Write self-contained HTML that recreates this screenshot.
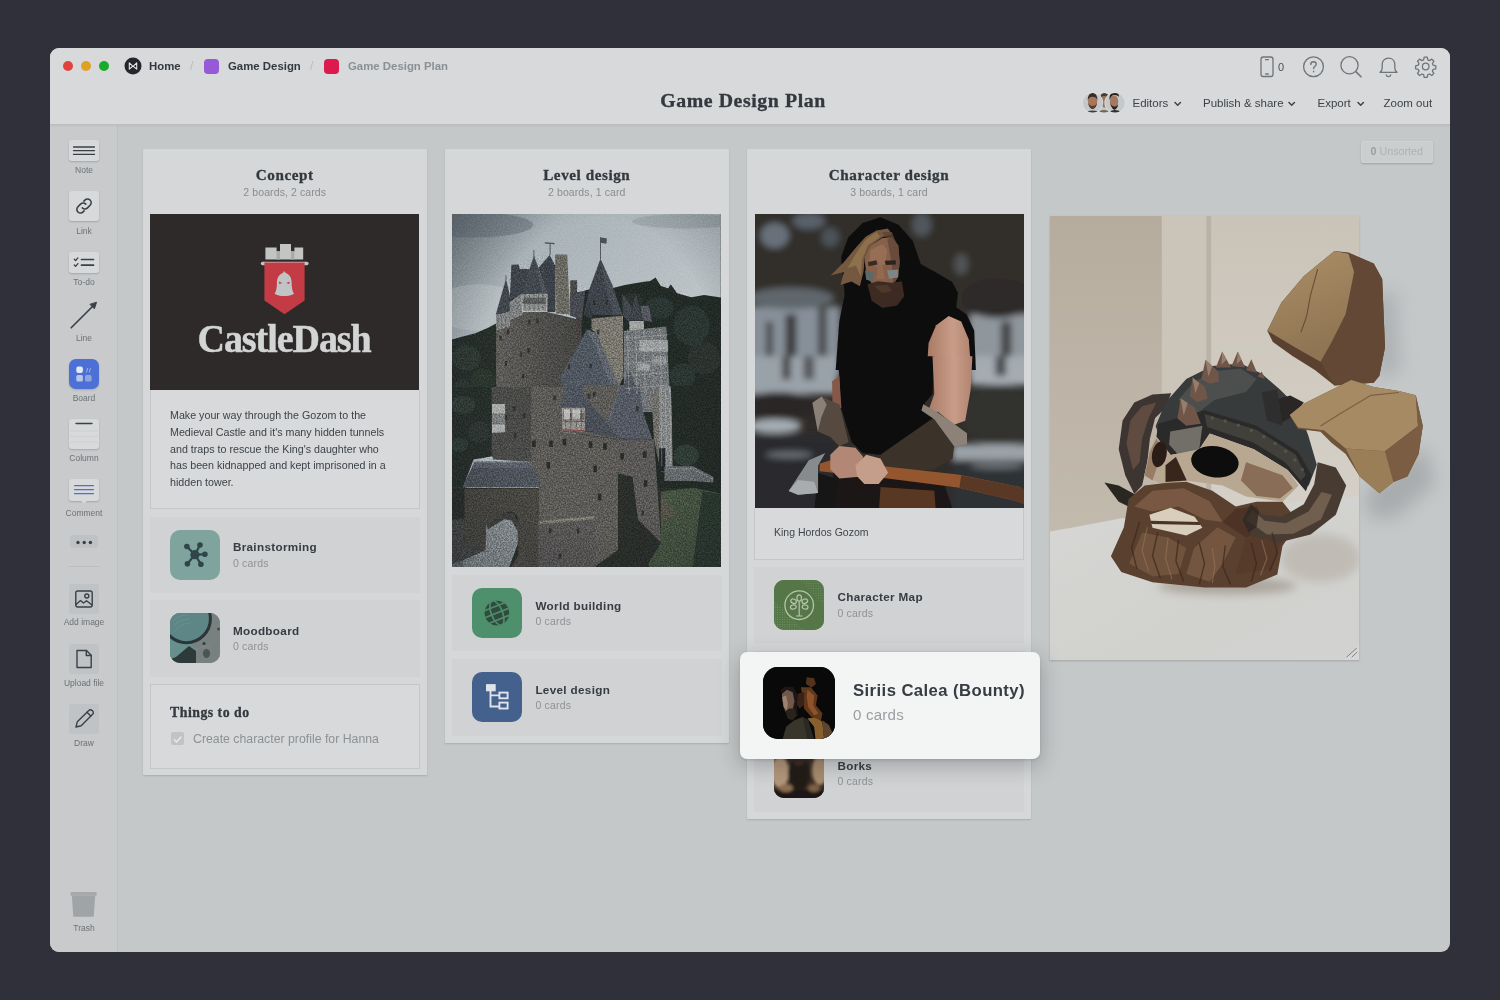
<!DOCTYPE html>
<html lang="en">
<head>
<meta charset="utf-8">
<title>Game Design Plan</title>
<style>
*{box-sizing:border-box;margin:0;padding:0}
html,body{width:1500px;height:1000px;overflow:hidden;background:#2f3039;font-family:"Liberation Sans",sans-serif;color:#33393f}
.abs{position:absolute}
#win{will-change:transform;position:absolute;left:50px;top:48px;width:1400px;height:904px;border-radius:9px;background:#c5c8c9;overflow:hidden}
#hdr{position:absolute;left:0;top:0;width:1400px;height:77px;z-index:5;background:#d7d9da;border-bottom:1px solid #bcbfc1;box-shadow:0 1px 2px rgba(0,0,0,.06)}
#side{position:absolute;left:0;top:77px;width:68px;height:827px;background:#c8cacb;border-right:1px solid #bdc0c2}
.tl{position:absolute;top:12.800px;width:10.600px;height:10.600px;border-radius:50%}
.bc{position:absolute;top:11.300px;font-size:11.400px;font-weight:bold;color:#33393f;line-height:14px;white-space:nowrap}
.sep{position:absolute;top:11.300px;font-size:12px;color:#b9bcbe;line-height:14px}
.sq{position:absolute;top:11.300px;width:15px;height:15px;border-radius:4px}
#title{position:absolute;left:0;width:1386px;top:38.700px;text-align:center;font-family:"Liberation Serif",serif;font-weight:bold;font-size:19.800px;letter-spacing:.6px;-webkit-text-stroke:.35px #33393f;line-height:26px;color:#33393f}
.menu{position:absolute;top:48px;font-size:11.5px;line-height:14px;color:#3d4349;white-space:nowrap}
.tool{position:absolute;left:0;width:68px;text-align:center;font-size:8.5px;color:#6c7277;line-height:10px}
.tbox{position:absolute;left:19px;width:30px;background:#d7d9da;border-radius:3px;box-shadow:0 1px 2px rgba(0,0,0,.18)}
.col{position:absolute;background:#d5d7d8;box-shadow:0 1px 2px rgba(0,0,0,.14);border-radius:1px}
.ctitle{position:absolute;left:0;width:100%;top:16px;text-align:center;font-family:"Liberation Serif",serif;font-weight:bold;font-size:15.200px;letter-spacing:.55px;-webkit-text-stroke:.3px #33393f;line-height:20px;color:#33393f}
.csub{position:absolute;left:0;width:100%;top:37.400px;text-align:center;font-size:10.500px;line-height:12px;color:#888d91;letter-spacing:.1px}
.card{position:absolute;left:7px;width:270px;background:#d0d2d3}
.card.b{background:#d7d9da;border:1px solid #c4c7c9}
.ic{position:absolute;left:20px;top:13px;width:50px;height:50px;border-radius:10px;overflow:hidden}
.bt{position:absolute;left:83.400px;top:22.500px;font-size:11.700px;letter-spacing:.33px;font-weight:bold;line-height:15px;color:#363c42;white-space:nowrap}
.bs{position:absolute;left:83.400px;top:40px;font-size:10.500px;line-height:12px;color:#8e9397;letter-spacing:.2px}

.av{position:absolute;top:45px;width:20px;height:20px;border-radius:50%;border:1.500px solid #d7d9da;overflow:hidden}
.av i{position:absolute;left:4px;top:3px;width:9px;height:10px;border-radius:50%;background:#8a6a58;box-shadow:0 10px 0 3px #4d4f55}
.chev{position:absolute;top:52.500px;width:8px;height:6px;fill:none;stroke:#3d4349;stroke-width:1.500;stroke-linecap:round;stroke-linejoin:round}

.gbox{position:absolute;left:19px;width:30px;height:30px;background:#c0c3c5;border-radius:3px}

#pg{position:absolute;left:-50px;top:-48px;width:1500px;height:1000px}
.unsorted{border:1px solid #d0d3d4;position:absolute;left:1361px;top:141px;width:71.500px;height:21.500px;border-radius:2px;background:#cdd0d1;box-shadow:0 1px 2px rgba(0,0,0,.2);font-size:10.700px;line-height:19.500px;text-align:center;color:#aeb2b5;background:#cbcecf}
.unsorted b{color:#9a9ea2}
.body{position:absolute;left:19.500px;top:17px;width:250px;white-space:nowrap;font-size:10.700px;line-height:16.800px;color:#3d4349}
#float{position:absolute;left:740px;top:651.700px;width:300px;height:107.700px;border-radius:7px;background:#f3f4f4;box-shadow:0 6px 22px rgba(20,24,30,.28),0 1px 3px rgba(20,24,30,.12)}
</style>
</head>
<body>
<div id="win">
  <div id="hdr">
    <div class="tl" style="left:12.5px;background:#e0443e"></div>
    <div class="tl" style="left:30.5px;background:#dea123"></div>
    <div class="tl" style="left:48.5px;background:#1aab29"></div>
    <svg class="abs" style="left:74px;top:9.300px" width="18" height="18" viewBox="0 0 18 18"><circle cx="9" cy="9" r="8.5" fill="#24262b"/><path d="M5.3 12.2V5.9l3.7 3.4 3.7-3.4v6.3l-3.7-3.2z" fill="none" stroke="#e4e6e7" stroke-width="1.1" stroke-linejoin="round"/></svg>
    <div class="bc" style="left:99px">Home</div>
    <div class="sep" style="left:140px">/</div>
    <div class="sq" style="left:154px;background:#965ad9"></div>
    <div class="bc" style="left:178px">Game Design</div>
    <div class="sep" style="left:260px">/</div>
    <div class="sq" style="left:274px;background:#dc1a4d"></div>
    <div class="bc" style="left:298px;color:#8b9094">Game Design Plan</div>
    <div id="title">Game Design Plan</div>

    <svg class="abs" style="left:1204px;top:5px" width="190" height="28" viewBox="0 0 190 28" fill="none" stroke="#6f757a" stroke-width="1.3" stroke-linecap="round" stroke-linejoin="round">
      <rect x="7" y="4" width="12" height="19.5" rx="2.2"/><path d="M11.5 6.6h3M11.7 21h2.6"/>
      <circle cx="59.5" cy="13.7" r="9.9"/><path d="M56.8 11.4c0-1.6 1.2-2.6 2.7-2.6s2.7 1 2.7 2.4c0 2-2.6 2.1-2.6 4.2M59.6 18.3v.4" stroke-width="1.4"/>
      <circle cx="95.5" cy="12.3" r="8.6"/><path d="M101.8 18.6l5.2 5.2" stroke-width="1.6"/>
      <path d="M126 19.3c1.6-1.2 2.2-2.6 2.2-4.4v-3.4c0-3.7 2.6-6.4 6.3-6.4s6.3 2.7 6.3 6.400v3.4c0 1.800.6 3.200 2.200 4.400z"/><path d="M132.200 21.800c.3 1.200 1.200 1.900 2.300 1.900s2-.7 2.300-1.900"/>
      <circle cx="171.700" cy="13.500" r="3.300"/>
      <path d="M170.200 4.200h3l.6 2.700 1.700.7 2.300-1.500 2.100 2.100-1.500 2.300.7 1.700 2.700.6v3l-2.700.6-.7 1.700 1.500 2.300-2.100 2.100-2.300-1.500-1.700.7-.6 2.700h-3l-.6-2.700-1.700-.7-2.300 1.500-2.100-2.100 1.500-2.300-.7-1.700-2.700-.6v-3l2.700-.6.7-1.700-1.500-2.300 2.100-2.100 2.300 1.500 1.700-.7z"/>
    </svg>
    <div class="abs" style="left:1228px;top:12px;font-size:11px;line-height:14px;color:#4a5056">0</div>
    <svg class="abs" style="left:1030px;top:42px" width="50" height="26" viewBox="0 0 50 26">
      <defs><clipPath id="avc1"><circle cx="12.600" cy="12.800" r="9.800"/></clipPath><clipPath id="avc2"><circle cx="24" cy="12.800" r="9.800"/></clipPath><clipPath id="avc3"><circle cx="35" cy="12.800" r="9.800"/></clipPath></defs>
      <circle cx="24" cy="12.800" r="10.600" fill="#dcdedf"/>
      <g clip-path="url(#avc2)"><rect x="12" y="0" width="24" height="26" fill="#c3c6c8"/><path d="M17 26c0-4 3-6 7-6s7 2 7 6z" fill="#6d6a58"/><ellipse cx="24.500" cy="11.500" rx="4.200" ry="6" fill="#9c7358"/><path d="M20 9c0-4 2-6 4.500-6s4.500 2 4.500 6c-1-2-2-3-4.500-3s-3.500 1-4.500 3z" fill="#4a3a30"/></g>
      <circle cx="35" cy="12.800" r="10.600" fill="#dcdedf"/>
      <g clip-path="url(#avc3)"><rect x="24" y="0" width="24" height="26" fill="#c6c9cb"/><path d="M28 26c0-4 3-6 7-6s7 2 7 6z" fill="#34302d"/><ellipse cx="34" cy="11.500" rx="4.200" ry="6.200" fill="#a17a60"/><path d="M29.500 10c-.5-5 2-8 5-8s4.500 2 4.500 5c-1-1.500-3-2-5-2s-3.500 2-4.500 5z" fill="#26201d"/><path d="M30 13c1 3 2 6 4.500 7 2-1 3.500-3 3.800-6-1 2-2.300 2.500-4 2.500s-3.300-1.500-4.300-3.500z" fill="#2b2320"/></g>
      <circle cx="12.600" cy="12.800" r="10.600" fill="#dcdedf"/>
      <g clip-path="url(#avc1)"><rect x="0" y="0" width="24" height="26" fill="#c4c8cb"/><path d="M5 26c0-4 3-5.500 7.600-5.500s7.600 1.500 7.600 5.500z" fill="#3f4044"/><ellipse cx="12.600" cy="12" rx="4.600" ry="6.400" fill="#a8775b"/><path d="M7.800 10.500c-.3-5 2-7.500 4.800-7.500s5.100 2.500 4.800 7.500c-.8-2.500-2-3.800-4.800-3.800s-4 1.300-4.800 3.800z" fill="#3a2a22"/><path d="M8.200 13c.6 3.500 2 6 4.400 6s3.800-2.500 4.400-6c-1 2-2.400 2.800-4.400 2.800s-3.400-.8-4.400-2.800z" fill="#5a3d2e"/></g>
    </svg>
    <div class="menu" style="left:1082.500px">Editors</div><svg class="chev" style="left:1124px"><path d="M1 1.500l2.700 2.700 2.700-2.700"/></svg>
    <div class="menu" style="left:1153px">Publish &amp; share</div><svg class="chev" style="left:1237.500px"><path d="M1 1.500l2.700 2.700 2.700-2.700"/></svg>
    <div class="menu" style="left:1267.500px">Export</div><svg class="chev" style="left:1306.500px"><path d="M1 1.500l2.700 2.700 2.700-2.700"/></svg>
    <div class="menu" style="left:1333.500px">Zoom out</div>
  </div>

  <div id="side">
    <div class="tbox" style="top:14.5px;height:21px"><svg width="30" height="21"><path d="M4.500 7h21M4.500 10.700h21M4.500 14.400h21" stroke="#3a4046" stroke-width="1.300" stroke-linecap="round"/></svg></div>
    <div class="tool" style="top:40.3px">Note</div>
    <div class="tbox" style="top:66px;height:30px"><svg width="30" height="30" fill="none" stroke="#3a4046" stroke-width="1.600" stroke-linecap="round"><path d="M13.300 16.900a3.600 3.600 0 0 0 5.200 0l2.600-2.700a3.600 3.600 0 0 0-5.200-5.100l-1 1"/><path d="M16.800 13.100a3.600 3.600 0 0 0-5.200 0l-2.700 2.700a3.600 3.600 0 0 0 5.200 5.100l1-1"/></svg></div>
    <div class="tool" style="top:101.2px">Link</div>
    <div class="tbox" style="top:126.5px;height:21px"><svg width="30" height="21" fill="none" stroke="#3a4046" stroke-width="1.400" stroke-linecap="round" stroke-linejoin="round"><path d="M5.300 7.300l1.300 1.300 2.300-2.700M5.300 13l1.300 1.300 2.300-2.700" stroke-width="1.300"/><path d="M12.500 7.500h12M12.500 13.200h12" stroke-width="1.700"/></svg></div>
    <div class="tool" style="top:151.8px">To-do</div>
    <svg class="abs" style="left:18px;top:174px" width="32" height="32" fill="none" stroke="#3a4046" stroke-width="1.600" stroke-linecap="round" stroke-linejoin="round"><path d="M3.200 28.800L25.500 6.500"/><path d="M28.400 3.600l-2 6.200-4.200-4.200z" fill="#3a4046" stroke-width="1"/></svg>
    <div class="tool" style="top:208.2px">Line</div>
    <div class="abs" style="left:19px;top:234px;width:30px;height:30px;border-radius:7px;background:#4c70d6;box-shadow:0 1px 2px rgba(0,0,0,.18)"><svg width="30" height="30"><rect x="7.300" y="7.500" width="6.600" height="6.600" rx="2" fill="#e3e8f3"/><rect x="7.300" y="16" width="6.600" height="6.600" rx="1.600" fill="#b9c6e6"/><rect x="16" y="16" width="6.600" height="6.600" rx="1.600" fill="#8fa5dc"/><path d="M17.500 13.500l1.200-4.500M20.300 13.500l1.200-4.500" stroke="#9fb2e2" stroke-width="1" fill="none"/></svg></div>
    <div class="tool" style="top:268px">Board</div>
    <div class="tbox" style="top:294px;height:30px"><svg width="30" height="30"><path d="M7 4.500h16" stroke="#3a4046" stroke-width="1.400" stroke-linecap="round"/><path d="M1 12h28M1 17.500h28M1 23h28" stroke="#cdd0d1" stroke-width="1"/></svg></div>
    <div class="tool" style="top:328px">Column</div>
    <div class="tbox" style="top:354px;height:21.500px"><svg width="30" height="26" style="overflow:visible"><path d="M11.500 21.500l3.500 3.200 3.500-3.200z" fill="#d7d9da"/><path d="M5.500 6.600h19M5.500 10.600h19M5.500 14.600h19" stroke="#4c70d6" stroke-width="1.200" stroke-linecap="round"/></svg></div>
    <div class="tool" style="top:383px">Comment</div>
    <div class="abs" style="left:19.500px;top:409.5px;width:28.500px;height:13px;border-radius:3px;background:#bfc2c4"><svg width="28.500" height="13"><circle cx="8" cy="6.500" r="1.700" fill="#3a4046"/><circle cx="14.200" cy="6.500" r="1.700" fill="#3a4046"/><circle cx="20.400" cy="6.500" r="1.700" fill="#3a4046"/></svg></div>
    <div class="abs" style="left:17.500px;top:440.5px;width:32px;height:1px;background:#bcbfc1"></div>
    <div class="gbox" style="top:458.5px"><svg width="30" height="30" fill="none" stroke="#3a4046" stroke-width="1.400" stroke-linejoin="round" stroke-linecap="round"><rect x="6.800" y="7" width="16.400" height="16" rx="2"/><circle cx="17.800" cy="12" r="2"/><path d="M7 20.500l4.500-4 3 2.500 3-2.300 5.500 4.300"/></svg></div>
    <div class="tool" style="top:492.2px">Add image</div>
    <div class="gbox" style="top:518.5px"><svg width="30" height="30" fill="none" stroke="#3a4046" stroke-width="1.400" stroke-linejoin="round" stroke-linecap="round"><path d="M8 6.500h9.500l4.700 4.800v12.200h-14.200z"/><path d="M17.300 6.700v4.800h4.700"/></svg></div>
    <div class="tool" style="top:553px">Upload file</div>
    <div class="gbox" style="top:579px"><svg width="30" height="30" fill="none" stroke="#3a4046" stroke-width="1.400" stroke-linejoin="round" stroke-linecap="round"><path d="M7 23l1.300-5.200 11.500-11.300a2.300 2.300 0 0 1 3.300 0l.5.500a2.300 2.300 0 0 1 0 3.300l-11.400 11.400z"/><path d="M18 8.300l3.800 3.800"/></svg></div>
    <div class="tool" style="top:612.7px">Draw</div>
    <svg class="abs" style="left:19px;top:764px" width="30" height="30"><path d="M2.800 6.500h23.400l-1.500 20.800a.6.600 0 0 1-.6.500h-19.200a.6.600 0 0 1-.6-.5z" fill="#9fa4a6"/><path d="M1.600 3.600a.6.600 0 0 1 .6-.6h24.800a.6.600 0 0 1 .6.600v3.200h-26z" fill="#a6aaac"/></svg>
    <div class="tool" style="top:798.3px">Trash</div>
  </div>

  <div id="pg">
    <div class="unsorted"><b>0</b> Unsorted</div>

    <!-- column 1 -->
    <div class="col" style="left:143px;top:149px;width:283.500px;height:626px">
      <div class="ctitle">Concept</div><div class="csub">2 boards, 2 cards</div>
      <div class="abs" id="logo" style="left:7px;top:65px;width:269px;height:176px;background:#2d2a29">
        <svg width="269.500" height="176" viewBox="0 0 269.500 176">
          <path d="M115.400 45.600V33.500h11.200v3.800h3.400V30h11v7.300h3.400v-3.800h8.800v12.100z" fill="#c3c4c4"/>
          <path d="M126.600 37.300h3.400v8.300h-3.400zM141 37.300h3.400v8.300H141z" fill="#a9abab"/>
          <rect x="110.800" y="47.800" width="47.800" height="3.400" rx="1.700" fill="#c3c4c4"/>
          <path d="M114.400 48.400h40.200V86.500L134.500 100.300 114.400 86.500z" fill="#c23b45"/>
          <path d="M134.300 57.600c.8 0 1.200.7 1.200 1.500 4.300 1.200 6.200 5.200 6.200 10.300 0 4.200.7 7.700 2.300 10.300-2.300 1.500-5.600 2.300-9.700 2.300s-7.400-.8-9.700-2.300c1.600-2.600 2.300-6.100 2.300-10.300 0-5.100 1.900-9.100 6.200-10.300 0-.8.400-1.500 1.200-1.500z" fill="#c0c4c5"/>
          <path d="M128.800 67.600l3.600 1.500-3 .8zM139.800 67.600l-3.600 1.500 3 .8z" fill="#c23b45"/>
          <text transform="translate(134.100 137.800) scale(1 1.055)" text-anchor="middle" font-family="'Liberation Serif',serif" font-weight="bold" font-size="38" fill="#d3d4d4" stroke="#d3d4d4" stroke-width=".5" letter-spacing="-1.050">CastleDash</text>
        </svg>
      </div>
      <div class="card b" style="left:6.500px;top:241px;height:118.500px;border-top:0">
        <p class="body">Make your way through the Gozom to the<br>Medieval Castle and it's many hidden tunnels<br>and traps to rescue the King's daughter who<br>has been kidnapped and kept imprisoned in a<br>hidden tower.</p>
      </div>
      <div class="card" style="left:6.500px;top:367.500px;height:76px"><div class="ic" id="ic-brain" style="background:#7fa49e"><!--BRAIN--><svg width="50" height="50" viewBox="0 0 50 50" style="display:block"><line x1="24.9" y1="24.7" x2="16.9" y2="16.5" stroke="#2f4549" stroke-width="2.2"/><circle cx="16.9" cy="16.5" r="2.8" fill="#2f4549"/><line x1="24.9" y1="24.7" x2="30" y2="15" stroke="#2f4549" stroke-width="2.2"/><circle cx="30" cy="15" r="2.8" fill="#2f4549"/><line x1="24.9" y1="24.7" x2="34.9" y2="24.3" stroke="#2f4549" stroke-width="2.2"/><circle cx="34.9" cy="24.3" r="2.8" fill="#2f4549"/><line x1="24.9" y1="24.7" x2="30.9" y2="34.2" stroke="#2f4549" stroke-width="2.2"/><circle cx="30.9" cy="34.2" r="2.8" fill="#2f4549"/><line x1="24.9" y1="24.7" x2="17.4" y2="33.7" stroke="#2f4549" stroke-width="2.2"/><circle cx="17.4" cy="33.7" r="2.8" fill="#2f4549"/><circle cx="24.9" cy="24.7" r="4.6" fill="#2f4549"/></svg><!--/BRAIN--></div><div class="bt">Brainstorming</div><div class="bs">0 cards</div></div>
      <div class="card" style="left:6.500px;top:451px;height:76.500px"><div class="ic" id="ic-mood" style="background:#5f7f80"><!--MOOD--><svg width="50" height="50" viewBox="0 0 50 50" style="display:block"><rect width="50" height="50" fill="#798180"/><path d="M-2 24c8 3 16 5 22 5l6 8v15h-28z" fill="#668f8e"/><path d="M-2 47l8-3 13-11 7 5v14h-28z" fill="#2e393a"/><circle cx="16.400" cy="5.700" r="24" fill="#5f8686" stroke="#2a3638" stroke-width="3"/><path d="M3 8c4-4 9-6 14-6M4 13c4-5 9-7 15-7M5 18c4-5 10-8 16-8" stroke="#7fa3a3" stroke-width=".7" fill="none" opacity=".55"/><ellipse cx="36.500" cy="40.500" rx="3.600" ry="4.600" fill="#4c5553"/><circle cx="34" cy="30.500" r="1.500" fill="#2f3a3b"/><circle cx="48.500" cy="16" r="1.500" fill="#444d4c"/><path d="M26 37c4-3 9-4 14-3" stroke="#8a9290" stroke-width=".8" fill="none" opacity=".6"/></svg><!--/MOOD--></div><div class="bt">Moodboard</div><div class="bs">0 cards</div></div>
      <div class="card b" style="left:6.500px;top:535px;height:84.500px">
        <div class="abs" style="left:19.500px;top:18px;font-family:'Liberation Serif',serif;font-weight:bold;font-size:13.800px;letter-spacing:.5px;-webkit-text-stroke:.3px #33393f;line-height:20px;color:#33393f;white-space:nowrap">Things to do</div>
        <div class="abs" style="left:20px;top:47.200px;width:13px;height:13px;border-radius:2px;background:#c1c4c6"><svg width="13" height="13"><path d="M3.200 6.700l2.300 2.300 4.300-4.800" fill="none" stroke="#e6e8e9" stroke-width="1.600" stroke-linecap="round" stroke-linejoin="round"/></svg></div>
        <div class="abs" style="left:42.500px;top:46.400px;font-size:12.300px;line-height:16px;color:#8c9195;white-space:nowrap">Create character profile for Hanna</div>
      </div>
    </div>

    <!-- column 2 -->
    <div class="col" style="left:445px;top:149px;width:283.500px;height:594px">
      <div class="ctitle">Level design</div><div class="csub">2 boards, 1 card</div>
      <div class="abs" id="castle" style="left:7.400px;top:65px;width:268.600px;height:353px;background:#5d6264"><!--CASTLE--><svg width="268.6" height="353" viewBox="0 0 268.6 353" style="display:block"><defs><linearGradient id="csky" x1="0" y1="0" x2="1" y2="1"><stop offset="0" stop-color="#7c878e"/><stop offset=".2" stop-color="#a9b3b8"/><stop offset=".6" stop-color="#bcc4c7"/><stop offset="1" stop-color="#adb6ba"/></linearGradient><linearGradient id="cstone" x1="0" y1="0" x2="1" y2="0"><stop offset="0" stop-color="#5d5c58"/><stop offset="1" stop-color="#434240"/></linearGradient><filter id="cblur"><feGaussianBlur stdDeviation=".5"/></filter><radialGradient id="cvig" cx=".55" cy=".45" r=".8"><stop offset=".55" stop-color="#1b2126" stop-opacity="0"/><stop offset="1" stop-color="#1b2126" stop-opacity=".4"/></radialGradient><filter id="cnoise" x="0" y="0" width="100%" height="100%" color-interpolation-filters="sRGB"><feTurbulence type="fractalNoise" baseFrequency=".7" numOctaves="3" seed="7"/><feColorMatrix values="1 0 0 0 0  1 0 0 0 0  1 0 0 0 0  0 0 0 0 1"/><feComponentTransfer><feFuncR type="linear" slope="2" intercept="-.5"/><feFuncG type="linear" slope="2" intercept="-.5"/><feFuncB type="linear" slope="2" intercept="-.5"/></feComponentTransfer></filter><clipPath id="cland"><polygon points="-5.4,126.9 10.8,122.4 23.4,119.2 36.0,113.8 44.1,108.9 44.1,100.5 54.0,64.8 59.4,52.2 67.0,50.4 81.9,41.8 97.6,41.1 103.0,40.5 115.2,40.5 118.3,66.3 125.1,66.3 136.8,76.5 148.5,44.7 159.9,70.2 170.5,79.2 187.3,68.4 203.5,63.4 218.8,70.6 239.5,83.2 275.5,84.6 275.5,360.1 -5.4,360.1"/></clipPath></defs><rect width="268.6" height="353" fill="url(#csky)"/><g filter="url(#cblur)"><ellipse cx="21.6" cy="10.8" rx="59.4" ry="12.6" fill="#66717a" opacity=".55"/><ellipse cx="234.1" cy="7.2" rx="54" ry="7.2" fill="#8d979c" opacity=".5"/><ellipse cx="27" cy="93.6" rx="46.8" ry="23.4" fill="#bcc3c5" opacity=".6"/><polygon points="-5.4,126.9 10.8,122.4 23.4,119.2 36,113.8 45,108.9 45,180.1 -5.4,180.1" fill="#252e2a"/><polygon points="124.2,79.2 136.8,75.6 162,73.8 172.8,71.1 187.3,68.4 198.1,67 203.5,63.4 208.9,72 216.1,74.2 218.8,70.6 225.1,79.2 239.5,83.2 252.1,81 275.5,84.6 275.5,342.1 124.2,342.1" fill="#222b27"/><ellipse cx="239.5" cy="111.6" rx="18" ry="19.8" fill="#2f3a34" opacity="0.7"/><ellipse cx="207.1" cy="93.6" rx="14.4" ry="10.8" fill="#313c36" opacity="0.7"/><ellipse cx="252.1" cy="144" rx="16.2" ry="16.2" fill="#2d3832" opacity="0.7"/><ellipse cx="230.5" cy="162" rx="12.6" ry="12.6" fill="#333e38" opacity="0.6"/><ellipse cx="180.1" cy="86.4" rx="10.8" ry="7.2" fill="#2e3933" opacity="0.6"/><ellipse cx="14.4" cy="144" rx="14.4" ry="12.6" fill="#323d37" opacity="0.7"/><ellipse cx="30.6" cy="165.6" rx="12.6" ry="10.8" fill="#2f3a34" opacity="0.6"/><ellipse cx="10.8" cy="172.8" rx="9" ry="7.2" fill="#364139" opacity="0.5"/><polygon points="44.1,109.8 59.4,103 72,98.1 95.4,98.1 129.6,106.2 129.6,126 115.2,180.1 44.1,180.1" fill="url(#cstone)"/><polygon points="43.8,100.5 54,64.8 59.8,90 58,101.2" fill="#3f444b"/><polygon points="44.1,101.2 58,97.2 58,112 44.1,116.7" fill="#808383"/><polygon points="59.4,50.8 67,50.4 67.5,54.9 77.8,54.9 72,76.5 69.3,80.1 57.6,89.1" fill="#3d4249"/><polygon points="57.6,88.2 69.3,80.1 70.2,100.8 58,106.2" fill="#7c7f7f"/><polygon points="86.4,54 97.6,41.1 103.5,52.2 103.5,98.1 95.4,98.1 95.4,79.2" fill="#3a3f46"/><polygon points="69,80.5 81.9,41.8 95.8,79.6" fill="#42474e"/><polygon points="69.3,80.5 95.4,80.1 94.5,96.7 71.1,96.7" fill="#8d908f"/><rect x="71.1" y="83.7" width="22.5" height="6.3" fill="#5d6060"/><polygon points="103,40.5 115.2,40.5 117.9,100.5 104.4,99.4" fill="#696760"/><rect x="118.3" y="66.3" width="6.8" height="13.9" fill="#474745"/><polygon points="117.9,79.2 133.2,77.1 130,106.6 117.9,101.2" fill="#444950"/><polygon points="132,100.8 136.8,76.5 148.5,44.7 159.9,70.2 170.5,101.2" fill="#3e434a"/><polygon points="139.5,104.4 171,101.7 171.4,162.9 162.9,180.1 154.8,144 144,119.2 139.5,115.2" fill="#79776e"/><polygon points="132.3,100.8 136.3,84.6 140.4,100.8 139.5,104.4" fill="#353a40"/><polygon points="170.1,79.2 180.1,93.6 177.3,108 171,101.7" fill="#41464d"/><polygon points="188.2,91.8 196.6,91.8 200.2,108 190.9,106.6" fill="#52575d"/><polygon points="177.3,106.6 183.7,80.1 191.2,106.6" fill="#3d4248"/><polygon points="177.3,107.1 191.9,107.1 191.9,122.8 177.3,117.4" fill="#a0a3a2"/><polygon points="171.9,117 214.3,112.5 218.8,198.1 171.9,198.1" fill="#6f7375"/><rect x="187.3" y="126" width="28.8" height="11.7" fill="#a4a8a9" opacity=".8"/><rect x="185.5" y="149.4" width="12.6" height="7.2" fill="#a4a8a9" opacity=".8"/><rect x="201.7" y="142.2" width="12.6" height="9" fill="#96999b" opacity=".7"/><polygon points="108,162.9 135,115.2 144.4,119.2 166,170.1 162.9,198.1 115.2,198.1" fill="#50565e"/><polygon points="165.6,189.1 177.3,154.8 189.4,189.1" fill="#4f555d"/><polyline points="98.1,28.8 98.1,41.8" fill="none" stroke="#3a3f45" stroke-width="0.8"/><polyline points="92.7,28.8 102.6,29.7" fill="none" stroke="#4a4f55" stroke-width="1.2"/><polyline points="148.5,23 148.5,45" fill="none" stroke="#3a3f45" stroke-width="0.8"/><polygon points="148,23.4 154.8,24.3 154.5,29.7 148.5,28.8" fill="#4b5056"/><polyline points="81.9,36 81.9,43.2" fill="none" stroke="#3a3f45" stroke-width="0.7"/><polyline points="54,61.2 54,65.7" fill="none" stroke="#3a3f45" stroke-width="0.7"/><polygon points="-5.4,173 40.5,173 40.5,242.3 21.6,245.4 10.8,273.8 -5.4,273.8" fill="#252e2a"/><polygon points="-5.4,273.8 13.5,272.9 13.5,307.1 -5.4,307.1" fill="#2c3a2e"/><rect x="-5.4" y="273.8" width="280.9" height="88.2" fill="#2a2e29"/><ellipse cx="10.8" cy="191" rx="12.6" ry="9" fill="#34403a" opacity="0.7"/><ellipse cx="27" cy="218" rx="10.8" ry="10.8" fill="#303b35" opacity="0.7"/><ellipse cx="7.2" cy="230.6" rx="9" ry="7.2" fill="#37433c" opacity="0.6"/><ellipse cx="239.5" cy="194.6" rx="16.2" ry="10.8" fill="#323d37" opacity="0.7"/><ellipse cx="255.7" cy="227" rx="12.6" ry="14.4" fill="#2f3a34" opacity="0.7"/><ellipse cx="232.3" cy="218" rx="9" ry="7.2" fill="#364139" opacity="0.6"/><ellipse cx="261.1" cy="259.4" rx="10.8" ry="9" fill="#323d36" opacity="0.6"/><polygon points="39.6,173 84.6,173 86.4,248.6 41.4,245.4 39.6,241.4" fill="#4a4947"/><polygon points="79.2,173 115.2,173 110.2,218 166,225.6 166,335.9 142.2,353.1 86.4,353.1 86.4,273.8 79.2,246.8" fill="#5b5a57"/><polygon points="40,190.1 53.1,190.1 53.1,218 40,218.9" fill="#a6a9a8"/><rect x="40" y="200" width="13.1" height="9.9" fill="#7b7e7e"/><polygon points="115.2,171.2 172.8,171.2 167.4,225.2 110.2,218" fill="#5b5a57"/><polygon points="107.7,193.2 115.2,171.2 130,171.2 134.5,194.1" fill="#4d535b"/><polygon points="109.8,193.7 133.6,194.1 132.5,217.5 110.4,216.6" fill="#95928f"/><rect x="111.3" y="199.1" width="21.1" height="7.2" fill="#6a625f"/><polygon points="133.2,183.8 144,196.4 156.6,209 167.8,224.7 133.2,217.5" fill="#484e56"/><polygon points="155.2,209.9 169.2,171.2 187.6,171.2 191.2,198.2 200.2,224.7 168.3,224.7" fill="#535962"/><polygon points="166,225.2 202,225.2 209.2,328.7 185.8,305.3 180.4,263 166,259.4" fill="#5a5956"/><polygon points="199,174.8 219.1,174.8 220.9,258 208.9,258 202,225.2" fill="#6d6c67"/><rect x="207.1" y="172.1" width="13" height="80.1" fill="#85898b" opacity=".75"/><rect x="207.1" y="234.2" width="6.3" height="23.4" fill="#23272a"/><polygon points="218.8,172.1 275.5,172.1 275.5,281.9 241.3,274.2 221.8,252.6" fill="#222b27"/><ellipse cx="234.1" cy="241.4" rx="12.6" ry="10.8" fill="#33403a" opacity=".8"/><polygon points="212.5,252.2 241.3,252.2 261.4,263 261.4,268.8 239.5,267 212.5,267" fill="#62676a"/><polygon points="208.9,277.4 241.3,273.8 275.5,281 275.5,362.1 189.1,362.1 208.9,328.7" fill="#445240"/><polygon points="250.3,277.4 275.5,281 275.5,362.1 239.5,362.1" fill="#27322b" opacity=".8"/><polygon points="208.9,281 225.1,299 208.9,309.8" fill="#55534a"/><polygon points="166,259.4 180.4,263 185.8,305.3 199,362.1 142.2,362.1 166,335.9" fill="#2c2f29"/><polygon points="10.4,273.3 22.5,247.7 79.6,247.7 88.6,273.3" fill="#4d535a"/><polygon points="22.5,247.7 79.6,247.7 81.9,254 19.8,254" fill="#5e656c" opacity=".7"/><polygon points="12.6,274.7 86.8,274.7 86.8,362.1 66.6,362.1 65.7,302.6 59.8,297.2 52.2,299 34.2,310.2 33.3,335.9 12.6,331.8" fill="#4a4742"/><polygon points="33.3,335.9 34.2,310.2 54,299 61.2,299 65.7,310.2 65.7,330 54,362.1 10.8,362.1 10.8,346.2" fill="#8c9396"/><polygon points="-5.4,306.6 12.6,304.4 12.6,331.8 32.8,335.4 10.8,346.2 -5.4,351.6" fill="#484a47"/><polygon points="-5.4,351.6 10.8,346.2 10.8,362.1 -5.4,362.1" fill="#6a6f71"/><polygon points="54,362.1 72,331.8 76.5,362.1" fill="#4f4c46"/><polygon points="86.4,307.1 142.2,301.7 144,362.1 86.4,362.1" fill="#585754"/><polygon points="86.4,307.1 142.2,301.7 142.2,305.3 86.4,310.7" fill="#716e66"/><polyline points="113.8,194.6 113.8,216.2" fill="none" stroke="#4a4643" stroke-width="0.6"/><polyline points="118.8,194.6 118.8,216.2" fill="none" stroke="#4a4643" stroke-width="0.6"/><polyline points="124.2,194.6 124.2,216.2" fill="none" stroke="#4a4643" stroke-width="0.6"/><polyline points="129.3,194.6 129.3,216.2" fill="none" stroke="#4a4643" stroke-width="0.6"/><polyline points="110.2,207.2 132.9,207.6" fill="none" stroke="#4a4643" stroke-width="0.7"/><polyline points="110.6,215.9 132.5,216.6" fill="none" stroke="#7a3a36" stroke-width="0.9"/><rect x="112" y="195.5" width="5.9" height="9.9" fill="#d2d3d1" opacity=".75"/><rect x="120.3" y="195.5" width="7.9" height="9.9" fill="#cfd0ce" opacity=".7"/><polyline points="40,200 53.1,200" fill="none" stroke="#55575a" stroke-width="0.6"/><polyline points="40,209.9 53.1,209.9" fill="none" stroke="#55575a" stroke-width="0.6"/><polyline points="208.9,173 209.8,252.2" fill="none" stroke="#c1c5c6" stroke-width="0.5" opacity=".7"/><polyline points="213.4,173 214.3,252.2" fill="none" stroke="#c1c5c6" stroke-width="0.5" opacity=".7"/><polyline points="217.9,173 218.8,252.2" fill="none" stroke="#c1c5c6" stroke-width="0.5" opacity=".7"/><polyline points="214.3,254.9 240.4,254.9 261.1,265.2" fill="none" stroke="#8d9294" stroke-width="0.6"/><polyline points="169.2,171.2 155.7,209" fill="none" stroke="#6d747d" stroke-width="0.7"/><polyline points="22.5,248.3 79.6,248.3" fill="none" stroke="#70777e" stroke-width="0.9"/><polygon points="34.2,310.2 54,299 61.2,299 65.7,310.2 65.7,317 59.4,306.2 52.2,305.3 36,315.2" fill="#2c2a27" opacity=".8"/><polyline points="86.4,308.4 142.2,303" fill="none" stroke="#8a867c" stroke-width="1"/><rect x="60.9" y="192.1" width="2.5" height="5" fill="#2b2a28" opacity=".85"/><rect x="70.8" y="199.3" width="2.5" height="5" fill="#2b2a28" opacity=".85"/><rect x="61.8" y="219.1" width="2.5" height="5" fill="#2b2a28" opacity=".85"/><rect x="52.8" y="201.1" width="2.5" height="5" fill="#2b2a28" opacity=".85"/><rect x="101.4" y="181.3" width="2.5" height="5" fill="#2b2a28" opacity=".85"/><rect x="141" y="177.7" width="2.5" height="5" fill="#2b2a28" opacity=".85"/><rect x="135.6" y="179.5" width="2.5" height="5" fill="#2b2a28" opacity=".85"/><rect x="184.2" y="192.1" width="2.5" height="5" fill="#2b2a28" opacity=".85"/><rect x="193.2" y="201.1" width="2.5" height="5" fill="#2b2a28" opacity=".85"/><rect x="189.6" y="296.5" width="2.5" height="5" fill="#2b2a28" opacity=".85"/><rect x="186" y="316.3" width="2.5" height="5" fill="#2b2a28" opacity=".85"/><rect x="124.8" y="314.5" width="2.5" height="5" fill="#2b2a28" opacity=".85"/><rect x="96.9" y="314.5" width="2.5" height="5" fill="#2b2a28" opacity=".85"/><rect x="106.8" y="339.7" width="2.5" height="5" fill="#2b2a28" opacity=".85"/><polyline points="72.9,80.5 72.9,96.3" fill="none" stroke="#4d4f50" stroke-width="0.6"/><polyline points="77.4,80.5 77.4,96.3" fill="none" stroke="#4d4f50" stroke-width="0.6"/><polyline points="81.9,80.5 81.9,96.3" fill="none" stroke="#4d4f50" stroke-width="0.6"/><polyline points="86.4,80.5 86.4,96.3" fill="none" stroke="#4d4f50" stroke-width="0.6"/><polyline points="90.9,80.5 90.9,96.3" fill="none" stroke="#4d4f50" stroke-width="0.6"/><polyline points="69.9,88.2 95.1,88.2" fill="none" stroke="#4d4f50" stroke-width="0.6"/><polyline points="45.9,101.7 45.9,115.2" fill="none" stroke="#55575a" stroke-width="0.5"/><polyline points="49.5,101.7 49.5,115.2" fill="none" stroke="#55575a" stroke-width="0.5"/><polyline points="53.7,101.7 53.7,115.2" fill="none" stroke="#55575a" stroke-width="0.5"/><polyline points="175.5,115.2 177,180.1" fill="none" stroke="#b5b9ba" stroke-width="0.5" opacity=".8"/><polyline points="183.7,115.2 185.1,180.1" fill="none" stroke="#b5b9ba" stroke-width="0.5" opacity=".8"/><polyline points="191.8,115.2 193.2,180.1" fill="none" stroke="#b5b9ba" stroke-width="0.5" opacity=".8"/><polyline points="199.9,115.2 201.3,180.1" fill="none" stroke="#b5b9ba" stroke-width="0.5" opacity=".8"/><polyline points="208,115.2 209.4,180.1" fill="none" stroke="#b5b9ba" stroke-width="0.5" opacity=".8"/><polyline points="171.9,124.2 216.1,120.6" fill="none" stroke="#b5b9ba" stroke-width="0.5" opacity=".8"/><polyline points="171.9,136.8 216.1,133.2" fill="none" stroke="#b5b9ba" stroke-width="0.5" opacity=".8"/><polyline points="171.9,149.4 216.1,145.8" fill="none" stroke="#b5b9ba" stroke-width="0.5" opacity=".8"/><polyline points="171.9,162 216.1,158.4" fill="none" stroke="#b5b9ba" stroke-width="0.5" opacity=".8"/><polyline points="171.9,174.6 216.1,171" fill="none" stroke="#b5b9ba" stroke-width="0.5" opacity=".8"/><rect x="76.3" y="105.7" width="2.2" height="4.7" fill="#2a2927" opacity=".85"/><rect x="84.4" y="104.8" width="2.2" height="4.7" fill="#2a2927" opacity=".85"/><rect x="54.7" y="115.6" width="2.2" height="4.7" fill="#2a2927" opacity=".85"/><rect x="47.5" y="121.9" width="2.2" height="4.7" fill="#2a2927" opacity=".85"/><rect x="68.2" y="138.1" width="2.2" height="4.7" fill="#2a2927" opacity=".85"/><rect x="75.4" y="134.5" width="2.2" height="4.7" fill="#2a2927" opacity=".85"/><rect x="52.9" y="147.1" width="2.2" height="4.7" fill="#2a2927" opacity=".85"/><rect x="70" y="159.7" width="2.2" height="4.7" fill="#2a2927" opacity=".85"/><rect x="153.8" y="85.9" width="2.2" height="4.7" fill="#2a2927" opacity=".85"/><rect x="141.2" y="86.8" width="2.2" height="4.7" fill="#2a2927" opacity=".85"/><rect x="145.1" y="115.6" width="2.2" height="4.7" fill="#2a2927" opacity=".85"/><rect x="116" y="150.7" width="2.2" height="4.7" fill="#2a2927" opacity=".85"/><rect x="137.6" y="149.8" width="2.2" height="4.7" fill="#2a2927" opacity=".85"/><polygon points="148.5,45 159.9,70.2 170.5,101.2 162,100.8 153,72" fill="#4a5058" opacity=".8"/><polygon points="135,115.2 144.4,119.2 166,170.1 158.4,170.1 142.2,129.6" fill="#656c74" opacity=".7"/><polygon points="81.9,41.8 95.8,79.6 90,79.6" fill="#4e545b" opacity=".8"/><rect x="80.1" y="226.5" width="3.6" height="6.5" fill="#2b2a28"/><rect x="97.2" y="226.5" width="3.6" height="6.5" fill="#2b2a28"/><rect x="110.7" y="224.7" width="3.6" height="6.5" fill="#2b2a28"/><rect x="94.5" y="248.1" width="3.6" height="6.5" fill="#2b2a28"/><rect x="136.8" y="227.4" width="3.6" height="6.5" fill="#2b2a28"/><rect x="151.2" y="229.2" width="3.6" height="6.5" fill="#2b2a28"/><rect x="168.3" y="239.1" width="3.6" height="6.5" fill="#2b2a28"/><rect x="190.9" y="237.3" width="3.6" height="6.5" fill="#2b2a28"/><rect x="191.8" y="266.1" width="3.6" height="6.5" fill="#2b2a28"/><rect x="145.8" y="279.6" width="3.6" height="6.5" fill="#2b2a28"/><rect x="141.3" y="251.7" width="3.6" height="6.5" fill="#2b2a28"/></g><rect width="268.6" height="353" fill="url(#cvig)"/><rect width="268.6" height="353" filter="url(#cnoise)" style="mix-blend-mode:overlay" opacity=".2" clip-path="url(#cland)"/><rect width="268.6" height="353" filter="url(#cnoise)" style="mix-blend-mode:overlay" opacity=".08"/></svg><!--/CASTLE--></div>
      <div class="card" style="top:426px;height:76px"><div class="ic" id="ic-world" style="background:#4e8f6c"><!--WORLD--><svg width="50" height="50" viewBox="0 0 50 50" style="display:block"><circle cx="24.9" cy="25" r="12.3" fill="#2f4a3e"/><g fill="none" stroke="#4e8d6a" stroke-width="1.7" transform="rotate(-22 24.9 25)"><ellipse cx="24.9" cy="25" rx="5.6" ry="13"/><path d="M12 25h26M13.500 18.300h23M13.500 31.700h23"/></g></svg><!--/WORLD--></div><div class="bt">World building</div><div class="bs">0 cards</div></div>
      <div class="card" style="top:510px;height:76.500px"><div class="ic" id="ic-level" style="background:#44618d"><!--LEVEL--><svg width="50" height="50" viewBox="0 0 50 50" style="display:block"><rect x="14" y="12.100" width="9.700" height="7.200" fill="#dfe3ea"/><path d="M18.500 19v15.500h8.500M18.500 23.400h8.500" fill="none" stroke="#dfe3ea" stroke-width="1.900"/><rect x="27.400" y="20.600" width="8.200" height="5.700" fill="none" stroke="#dfe3ea" stroke-width="1.900"/><rect x="27.400" y="30.600" width="8.200" height="5.900" fill="none" stroke="#dfe3ea" stroke-width="1.900"/></svg><!--/LEVEL--></div><div class="bt">Level design</div><div class="bs">0 cards</div></div>
    </div>

    <!-- column 3 -->
    <div class="col" style="left:747px;top:149px;width:284px;height:669.500px">
      <div class="ctitle">Character design</div><div class="csub">3 boards, 1 card</div>
      <div class="abs" id="king" style="left:7.700px;top:65px;width:269px;height:293.500px;background:#3a3d40"><!--KING--><svg width="269" height="293.5" viewBox="0 0 269 293.5" style="display:block"><defs><filter id="kb1" x="-5%" y="-5%" width="110%" height="110%"><feGaussianBlur stdDeviation="3"/></filter><filter id="kb2" x="-5%" y="-5%" width="110%" height="110%"><feGaussianBlur stdDeviation=".7"/></filter><linearGradient id="karm" x1="0" y1="0" x2="1" y2="0"><stop offset="0" stop-color="#a97a66"/><stop offset=".6" stop-color="#c89d88"/><stop offset="1" stop-color="#b08470"/></linearGradient></defs><rect width="269" height="293.5" fill="#302c29"/><g filter="url(#kb1)"><rect x="-10.8" y="-10.8" width="290.5" height="172.2" fill="#312d2a"/><ellipse cx="19.7" cy="21.5" rx="14.3" ry="12.6" fill="#68717a"/><ellipse cx="53.8" cy="7.2" rx="16.1" ry="8.1" fill="#596169"/><ellipse cx="75.3" cy="23.3" rx="9" ry="9.9" fill="#4c5258"/><ellipse cx="166.8" cy="10.8" rx="9.9" ry="11.7" fill="#50565b"/><ellipse cx="206.2" cy="50.2" rx="7.2" ry="10.8" fill="#5e6468" opacity=".7"/><rect x="-10.8" y="93.3" width="95.1" height="68.1" fill="#87909a"/><ellipse cx="35.9" cy="84.3" rx="43" ry="10.8" fill="#5f666c"/><rect x="30.5" y="100.4" width="10.8" height="61" fill="#3a3a3a"/><rect x="10.8" y="107.6" width="7.2" height="53.8" fill="#4a4c4e"/><rect x="62.8" y="93.3" width="9" height="68.1" fill="#4b4d50"/><rect x="215.2" y="100.4" width="64.6" height="61" fill="#8f979d"/><rect x="245.7" y="107.6" width="10.8" height="53.8" fill="#45474a"/><ellipse cx="242.1" cy="84.3" rx="35.9" ry="19.7" fill="#2f2c29"/><rect x="-10.8" y="142.2" width="93.3" height="37.7" fill="#9aa2a9"/><rect x="26.9" y="142.2" width="9" height="23.3" fill="#4a4c4e"/><rect x="48.4" y="142.2" width="10.8" height="23.3" fill="#55585b"/><ellipse cx="23.3" cy="192.4" rx="41.2" ry="14.3" fill="#292827"/><ellipse cx="19.7" cy="212.1" rx="26.9" ry="7.2" fill="#a4acb2"/><rect x="-10.8" y="221.1" width="95.1" height="84.3" fill="#2a2c2f"/><ellipse cx="34.1" cy="240.8" rx="23.3" ry="3.2" fill="#6a7075"/><rect x="215.2" y="142.2" width="64.6" height="28.7" fill="#a4acb2"/><rect x="240.3" y="142.2" width="10.8" height="19.7" fill="#4b4d4f"/><ellipse cx="243.9" cy="201.4" rx="39.5" ry="30.5" fill="#33322e"/><rect x="197.3" y="230.1" width="82.5" height="16.1" fill="#9aa2a8"/><rect x="197.3" y="246.2" width="82.5" height="59.2" fill="#2e3134"/><ellipse cx="242.1" cy="251.6" rx="26.9" ry="3.2" fill="#6d7378"/></g><g filter="url(#kb2)"><polygon points="86.1,43 93.3,23.3 107.6,9 125.5,3.2 143.5,10.8 157.8,26.9 165.9,50.2 179.3,57.4 197.3,68.1 203,78.9 201.2,93.3 211.6,100.4 219.2,116.6 220.9,156 80.7,156 84.3,107.6 89.7,80.7" fill="#0e0d0d"/><polygon points="171.8,156 173.6,129.1 181.1,111.2 193.7,101.9 206.2,107.6 213.8,125.5 216.1,156" fill="url(#karm)"/><polygon points="104.6,39.6 113,21.6 127.4,13.2 139.4,14.4 149,26.4 152.6,48 151.4,72 137,96 115.4,93.6 104.6,72" fill="#0a0909"/><polygon points="109.4,43.8 115.4,31.5 127.4,24 137,23 143.3,31.5 144.7,48 143.3,62.7 137,72.3 119,72.3 111.6,62.4" fill="#86614a"/><polygon points="132.2,25.2 137,23 143.3,31.5 144.7,48 143.3,62.7 138.2,70.8 137,50.4" fill="#5e4535" opacity=".75"/><polygon points="115.4,36 127.4,30 132.2,36 130.4,50.4 121.4,52.8 114.2,48" fill="#9a7257" opacity=".8"/><polygon points="113,48 121.4,46.2 122.6,50.4 113.6,52.2" fill="#3a2a22"/><polygon points="129.8,46.8 140.6,46.2 140.9,50.4 130.8,51" fill="#2f231d"/><polygon points="110,56.4 118.1,57.6 117.8,67.5 111.2,65.8" fill="#5d6868"/><polygon points="132.2,56.4 143,55.5 142.8,63.6 134,64.8" fill="#7d878a"/><polygon points="122.6,51.6 127.4,50.4 129.8,64.8 121.4,65.4" fill="#94694f"/><polygon points="112.4,70.2 122.6,67.2 137,68.7 146.9,67.2 149.3,81.9 142.1,91.5 127.4,93.9 116.6,86.7" fill="#3c2c23"/><polygon points="119,72 132.2,70.8 137,76.8 127.4,79.2" fill="#553c2d" opacity=".8"/><polygon points="132.8,14.6 121.4,16.6 110.6,22.8 101,33.6 89,48 75.6,61.5 89,57.9 85.4,71.1 96.5,67.5 104.9,72.3 108.5,57.9 109.7,43.5 115.7,31.5 127.7,23 137.3,20.6" fill="#75593f"/><polygon points="121.4,18 110.6,25.8 101,39.6 92.6,54 101,51.6 105.8,62.4 107,45.6 113,31.2 125,22.8" fill="#967652" opacity=".8"/><polygon points="127.4,18 137,18 141.8,30 137,24 129.8,22.8" fill="#5a4433" opacity=".8"/><polygon points="82.5,142.2 179.3,142.2 177.5,179.9 168.6,190.6 179.3,203.2 161.4,215.7 125.5,240.8 107.6,239.1 96.8,228.3 86.1,194.2 84.3,161.9" fill="#0e0d0d"/><polygon points="78.9,251.6 188.3,267.7 199.1,300 75.3,300" fill="#1b1714"/><polygon points="125.5,273.1 179.3,276.7 181.1,300 123.7,300" fill="#583824"/><polygon points="62.8,258.8 84.3,266 77.1,300 59.2,300" fill="#141313"/><polygon points="177.5,142.2 217.4,142.2 215.6,176.3 210.2,206.8 199.1,210.7 182.9,197.8 172.2,200 179.3,179.9" fill="url(#karm)"/><polygon points="77.1,167.3 84.3,161.9 86.4,194.2 77.5,191" fill="#86594a"/><polygon points="57.4,188.8 66.7,182.6 84.6,190.6 93.6,228.3 84.3,232.2 75.3,222.9 62.8,217.5" fill="#54493f"/><polygon points="57.4,188.8 66.7,182.6 71.7,190.6 66.4,203.2 62.8,217.5" fill="#8a8077"/><polygon points="125.5,240.8 161.4,215.7 179.3,203.2 199.4,230.1 197.6,244.4 179.3,255.5 136.3,259.1 125.5,251.6" fill="#3a3029"/><polygon points="168.2,190.3 181.1,197.4 199.4,210 212,219.3 212,230.4 199.1,232.2 179.3,205.3 166.4,196.4" fill="#8c8277"/><polygon points="64.6,249.8 75.3,246.2 202.7,260.6 265.4,273.1 279.8,285.7 279.8,292.9 256.5,286 202.7,273.5 132.7,264.5 64.6,257.3" fill="#94572e"/><polygon points="206.2,261.5 265.4,273.1 279.8,285.7 279.8,292.9 256.5,286 204.4,273.8" fill="#5a3825"/><polygon points="33.7,277.1 53.8,246.2 70.3,239.1 63.1,251.6 63.1,278.9 43,280.7" fill="#888b8d"/><polygon points="33.7,277.1 43,266 59.2,267.7 63.1,278.9 43,280.7" fill="#a9acae"/><polygon points="75.3,240.8 84.3,231.9 100.4,233.7 108,242.6 104.4,262.7 84.3,264.5 75.3,255.2" fill="#b38774"/><polygon points="100.4,251.6 111.2,240.8 125.5,244.4 133.1,258.8 123.7,269.9 109.4,269.9 102.2,262.4" fill="#c49d8b"/></g></svg><!--/KING--></div>
      <div class="card b" style="left:7px;top:358.500px;height:52px;border-top:0">
        <div class="abs" style="left:19px;top:18.500px;font-size:10.500px;line-height:13px;color:#40464c;white-space:nowrap">King Hordos Gozom</div>
      </div>
      <div class="card" style="left:7px;top:417.500px;height:76.500px"><div class="ic" id="ic-char" style="background:#5e7e50"><!--CHAR--><svg width="50" height="50" viewBox="0 0 50 50" style="display:block"><defs><pattern id="cdots" width="2.400" height="2.400" patternUnits="userSpaceOnUse"><circle cx="1.200" cy="1.200" r=".45" fill="#86a274"/></pattern></defs><rect width="50" height="50" fill="#557748"/><path d="M0 50V20L30 50z" fill="url(#cdots)"/><path d="M50 0v26L26 0z" fill="url(#cdots)" opacity=".7"/><circle cx="25.200" cy="25.200" r="14.300" fill="none" stroke="#b7c3ae" stroke-width="1.300"/><g fill="none" stroke="#b7c3ae" stroke-width="1.200"><path d="M25.200 35.500v-14M22 36h6.400"/><ellipse cx="25.200" cy="18" rx="2.300" ry="3.200"/><ellipse cx="19.600" cy="21.200" rx="2.900" ry="2.100" transform="rotate(25 19.600 21.200)"/><ellipse cx="30.800" cy="21.200" rx="2.900" ry="2.100" transform="rotate(-25 30.800 21.200)"/><ellipse cx="19.300" cy="27" rx="2.900" ry="2.100" transform="rotate(-15 19.300 27)"/><ellipse cx="31.100" cy="27" rx="2.900" ry="2.100" transform="rotate(15 31.100 27)"/></g></svg><!--/CHAR--></div><div class="bt">Character Map</div><div class="bs">0 cards</div></div>
      <div class="card" style="left:7px;top:502px;height:76px"></div>
      <div class="card" style="left:7px;top:586px;height:76.500px"><div class="ic" id="ic-borks" style="background:#5b4636"><!--BORKS--><svg width="50" height="50" viewBox="0 0 50 50" style="display:block"><defs><filter id="bkb"><feGaussianBlur stdDeviation="1.600"/></filter></defs><rect width="50" height="50" fill="#3a2d24"/><g filter="url(#bkb)"><ellipse cx="6" cy="24" rx="9" ry="16" fill="#b3977a"/><ellipse cx="46" cy="22" rx="8" ry="15" fill="#a88c6e"/><ellipse cx="25" cy="26" rx="11" ry="17" fill="#241c18"/><ellipse cx="25" cy="12" rx="6" ry="6" fill="#3b2c22"/><rect x="-5" y="42" width="60" height="12" fill="#1e1815"/><ellipse cx="12" cy="40" rx="7" ry="4" fill="#8d6f52"/><ellipse cx="40" cy="40" rx="6" ry="4" fill="#7d5f45"/></g></svg><!--/BORKS--></div><div class="bt">Borks</div><div class="bs">0 cards</div></div>
    </div>

    <!-- skull image -->
    <div class="abs" id="skull" style="left:1049.500px;top:216px;width:309px;height:444px;background:#b9b3a9;box-shadow:0 1px 2px rgba(0,0,0,.18)"><!--SKULL--><svg width="309" height="444" viewBox="0 0 309 444" style="display:block;overflow:visible" overflow="visible"><defs><clipPath id="sclip"><rect width="309" height="444"/></clipPath><filter id="sb1" x="-10%" y="-10%" width="120%" height="120%"><feGaussianBlur stdDeviation=".6"/></filter><filter id="sb2" x="-30%" y="-30%" width="160%" height="160%"><feGaussianBlur stdDeviation="9"/></filter><filter id="sb3" x="-30%" y="-30%" width="160%" height="160%"><feGaussianBlur stdDeviation="5"/></filter><linearGradient id="swl" x1="0" y1="0" x2="0" y2="1"><stop offset="0" stop-color="#b6ac9e"/><stop offset="1" stop-color="#c9c1b6"/></linearGradient><linearGradient id="swr" x1="0" y1="0" x2="0" y2="1"><stop offset="0" stop-color="#c9c3b8"/><stop offset=".6" stop-color="#d5d0c7"/><stop offset="1" stop-color="#d5d0c7"/></linearGradient><linearGradient id="stb" x1="0" y1="0" x2="1" y2="1"><stop offset="0" stop-color="#d6d6d4"/><stop offset=".6" stop-color="#d1d1ce"/><stop offset="1" stop-color="#d2d3d1"/></linearGradient><linearGradient id="srk" x1="0" y1="0" x2=".3" y2="1"><stop offset="0" stop-color="#ab8f68"/><stop offset="1" stop-color="#8f7453"/></linearGradient></defs><g filter="url(#sb2)" opacity=".32"><polygon points="318.5,82 345.2,74 350.5,154 326.5,164.7" fill="#7d8285"/><polygon points="315.8,275.3 374.5,230 385.2,267.3 345.2,302 318.5,302" fill="#6d7275"/></g><g clip-path="url(#sclip)"><rect x="-1.5" y="-2" width="114.7" height="476" fill="url(#swl)"/><rect x="111.8" y="-2" width="49.3" height="476" fill="#cac4b9"/><rect x="156.4" y="-2" width="4.8" height="476" fill="#b9b2a6"/><rect x="161.2" y="-2" width="149.3" height="476" fill="url(#swr)"/><polygon points="-1.5,315.9 70.5,302.5 230.5,287.3 310.5,280.1 310.5,446 -1.5,446" fill="url(#stb)"/><g filter="url(#sb3)"><ellipse cx="177.2" cy="370" rx="69.3" ry="8.5" fill="#aaa49b"/><ellipse cx="270.5" cy="342" rx="40" ry="24" fill="#c0bcb5"/></g><g filter="url(#sb1)"><polygon points="68.7,233.2 72.6,204.6 84.3,186.4 102.5,178.6 121.2,177.3 115.5,192.1 105.1,202 99.9,222.8 97.3,246.2 92.1,269.6 84.3,277.9 75.2,259.2" fill="#3c3631"/><polygon points="76.5,228 80.4,204.6 92.1,190.3 106.4,186.4 98.6,202 92.1,222.8 89.5,246.2 83,254" fill="#6a5444" opacity=".75"/><polygon points="54.4,266.5 68.7,269.6 84.3,277.9 79.6,290.9 68.7,285.7" fill="#2a2623"/><polygon points="105.6,210.3 115.5,186.4 136.3,163 162.3,150 190.9,147.4 211.7,157.8 229.9,173.4 248.1,191.6 258.5,220.2 266.8,248.8 258.5,270.1 242.9,248.8 206.5,228 159.7,212.4 149.3,228 120.7,236.3 110.3,222.8" fill="#393a3b"/><polygon points="128.5,183.8 144.1,165.6 167.5,154.7 190.9,152.6 206.5,163 196.1,176 164.9,183.8 144.1,199.4" fill="#55585a" opacity=".7"/><polygon points="108.2,207.7 154.5,194.2 206.5,209.8 248.1,235.8 261.6,259.2 255.9,275.3 237.7,254 203.9,233.2 159.7,217.6 149.3,233.2 120.7,238.9 106.4,220.7" fill="#2b2a29"/><polygon points="154.5,198.1 206.5,213.7 245.5,238.4 255.9,259.2 250.7,264.4 235.1,246.2 203.9,226.7 157.1,211.1" fill="#4a453f" opacity=".8"/><polygon points="120.2,215.5 152.4,209.8 149.3,233.2 128.5,238.9 119.1,228.5" fill="#726e67"/><polygon points="223.4,184.3 240.3,179.6 253.8,186.4 243.4,199.9 229.9,207.7" fill="#292828"/><polygon points="211.7,176 227.3,173.4 232.5,209.8 216.9,204.6" fill="#2f2f2f"/><polygon points="127.5,202.5 130.6,182.2 144.6,191.6 150.9,207.7 136.3,209.8" fill="#6f574a"/><polygon points="139.9,180.2 142.5,161.4 155,170.8 157.6,182.8 147.2,185.9" fill="#6f574a"/><polygon points="151.4,163 155.5,143.8 168,155.2 169.1,165.6 159.7,167.7" fill="#6f574a"/><polygon points="165.9,151.6 172.2,135.4 181,151.6" fill="#6f574a"/><polygon points="181.5,150 187.8,135.4 195.1,151.6" fill="#6f574a"/><polygon points="196.1,154.2 201.3,143.2 207,156.8" fill="#6f574a"/><polygon points="207.5,160.4 211.7,155.5 215.1,163" fill="#6f574a"/><polygon points="130.6,182.2 137.6,186.9 133.7,199.4" fill="#a08877" opacity=".8"/><polygon points="142.5,161.4 149.3,166.9 145.4,177.3" fill="#a08877" opacity=".8"/><polygon points="155.5,143.8 162.3,150 158.4,160.4" fill="#a08877" opacity=".8"/><polygon points="172.2,135.4 176.6,143.5 171.4,148.7" fill="#a08877" opacity=".8"/><polygon points="187.8,135.4 191.4,143.5 186.7,147.9" fill="#a08877" opacity=".8"/><polygon points="94.2,259.7 99.9,233.2 106.4,220.7 120.7,238.9 149.3,233.2 159.7,217.6 203.9,233.2 237.7,254 248.6,269.6 232.5,285.7 196.1,280.5 172.7,269.6 136.3,264.4 115.5,270.1" fill="#b8a791"/><polygon points="196.1,246.2 232.5,259.2 242.9,272.2 229.9,282.6 206.5,280 190.9,264.4" fill="#7d5f49" opacity=".8"/><polygon points="94.7,259.2 99.9,235.8 106.4,222.8 112.9,233.2 102.5,264.4" fill="#8a6a52" opacity=".7"/><ellipse cx="109.3" cy="238.4" rx="7.3" ry="13" fill="#2a1d17" transform="rotate(10 109.3 238.4)"/><ellipse cx="164.9" cy="245.7" rx="23.9" ry="15.6" fill="#110d0b" transform="rotate(8 164.9 245.7)"/><polygon points="115.5,249.3 125.9,241 136.8,264.4 115.5,266" fill="#38261d"/><polygon points="78.6,283.1 94.7,269.6 115.5,267 136.3,265.7 162.3,274.8 185.7,290.4 206.5,285.7 232.5,285.7 248.6,306 232.5,329.9 227.3,358.5 196.1,371.5 154.5,371.5 102.5,366.3 71.3,355.9 60.9,340.3 73.9,311.2" fill="#5a3f2e"/><polygon points="84.3,290.4 102.5,274.8 133.7,272.2 159.7,285.2 172.7,306 154.5,303.4 128.5,290.4 102.5,295.6" fill="#7f6049" opacity=".8"/><polygon points="79.1,347.6 92.1,316.4 118.1,321.6 136.3,332 128.5,358 102.5,360.6" fill="#795b45" opacity=".7"/><polygon points="136.3,358 144.1,332 167.5,311.2 185.7,321.6 172.7,347.6 159.7,365.8" fill="#7c5e47" opacity=".75"/><polygon points="185.7,358 196.1,321.6 216.9,311.2 232.5,321.6 222.1,352.8" fill="#56392a" opacity=".8"/><polygon points="172.7,306 185.7,293 206.5,290.4 216.9,311.2 196.1,321.6" fill="#4a3124" opacity=".8"/><polygon points="99.4,298.7 120.7,291.7 144.6,300.8 152.4,311.7 136.3,319.5 102.5,311.7" fill="#d8cebb"/><polygon points="100.4,304.7 149.3,306 150.3,309.1 101.5,308.1" fill="#4a3427"/><polygon points="190.9,304.7 200.8,288.3 213,298.7 232.5,300.8 253.8,288.3 264.2,268.3 267.6,246.2 285.8,251.4 296.2,269.6 285.8,298.7 260.6,318.5 227.8,326.8 202.6,320.3" fill="#473b32"/><polygon points="196.1,303.4 202.6,294.3 214.8,304.7 235.6,307.3 258.5,295.6 271.5,276.1 281.9,278.7 271,303.4 243.4,317.7 216.9,318.5" fill="#7e6b59" opacity=".75"/><polygon points="192.2,303.9 200.8,288.3 209.1,295.6 206.5,311.2 198.7,316.4" fill="#2f2723" opacity=".8"/><ellipse cx="162.3" cy="202" rx="1.8" ry="1.8" fill="#5c5750" opacity=".8"/><ellipse cx="175.3" cy="205.1" rx="1.8" ry="1.8" fill="#5c5750" opacity=".8"/><ellipse cx="188.3" cy="209.3" rx="1.8" ry="1.8" fill="#5c5750" opacity=".8"/><ellipse cx="201.3" cy="214.5" rx="1.8" ry="1.8" fill="#5c5750" opacity=".8"/><ellipse cx="213.8" cy="220.7" rx="1.8" ry="1.8" fill="#5c5750" opacity=".8"/><ellipse cx="225.2" cy="227.5" rx="1.8" ry="1.8" fill="#5c5750" opacity=".8"/><ellipse cx="235.6" cy="235.3" rx="1.8" ry="1.8" fill="#5c5750" opacity=".8"/><ellipse cx="245" cy="244.1" rx="1.8" ry="1.8" fill="#5c5750" opacity=".8"/><ellipse cx="252.3" cy="253.5" rx="1.8" ry="1.8" fill="#5c5750" opacity=".8"/><polyline points="89.5,306 81.7,332 86.9,352.8" fill="none" stroke="#3a271c" stroke-width="1.4" opacity=".7"/><polyline points="107.7,316.4 102.5,339.8 110.3,361.9" fill="none" stroke="#3a271c" stroke-width="1.4" opacity=".7"/><polyline points="128.5,324.2 125.9,345 133.7,365.8" fill="none" stroke="#3a271c" stroke-width="1.4" opacity=".7"/><polyline points="149.3,326.8 154.5,347.6 149.3,368.4" fill="none" stroke="#3a271c" stroke-width="1.4" opacity=".7"/><polyline points="175.3,329.4 172.7,350.2 180.5,368.4" fill="none" stroke="#3a271c" stroke-width="1.4" opacity=".7"/><polyline points="201.3,326.8 206.5,347.6 201.3,365.8" fill="none" stroke="#3a271c" stroke-width="1.4" opacity=".7"/><polyline points="222.1,316.4 227.3,337.2 219.5,355.4" fill="none" stroke="#3a271c" stroke-width="1.4" opacity=".7"/><polyline points="97.3,311.2 92.1,334.6 98.6,355.4" fill="none" stroke="#9a775a" stroke-width="1.2" opacity=".6"/><polyline points="118.1,321.6 115.5,342.4 122,363.2" fill="none" stroke="#9a775a" stroke-width="1.2" opacity=".6"/><polyline points="162.3,332 164.9,350.2 162.3,367.1" fill="none" stroke="#9a775a" stroke-width="1.2" opacity=".6"/><polyline points="211.7,324.2 216.9,342.4 210.4,359.3" fill="none" stroke="#9a775a" stroke-width="1.2" opacity=".6"/></g><path d="M309 429v15h-15z" fill="#d9dad9" opacity=".8"/><path d="M296.500 441.200L306.900 432M301.700 441.200L307.300 436" stroke="#7f8386" stroke-width="1" fill="none"/></g><g filter="url(#sb1)"><polygon points="217.3,114.8 231.3,86.8 253.7,60.2 284.5,35 298.5,36.4 323.7,47.6 332.2,63 335,131.6 329.4,159.7 323.7,166.7 284.5,169.5 264.9,154.1 242.5,140.1 222.9,126" fill="#5a402e"/><polygon points="298.5,37 323.7,47.6 332.2,63 335,131.6 329.4,159.7 323.7,166.7 284.5,169.5 270.5,145.7 281.7,126 295.7,98 304.1,56" fill="#644a35"/><polygon points="217.3,114.8 231.3,86.8 253.7,60.2 284.5,35 298.5,37.8 304.1,56 295.7,98 281.7,126 270.5,145.7 245.3,131.6" fill="url(#srk)"/><polyline points="267.7,53.2 260.7,78.4 256.5,100.8 250.9,116.2" fill="none" stroke="#6a4f38" stroke-width="1.1"/><polygon points="239.7,198.9 253.7,187.7 301.3,163.9 323.7,170.9 349,175.1 365.8,179.3 372.8,210.1 368.6,238.1 357.4,260.5 343.4,266.1 329.4,277.3 309.7,260.5 295.7,238.1 281.7,226.9 270.5,215.7 248.1,212.9" fill="#6e533b"/><polygon points="239.7,198.9 253.7,187.7 301.3,163.9 323.7,170.9 349,175.1 365.8,179.3 368,210.1 335,235.3 295.7,232.5 273.9,214.3 248.1,211.5" fill="#a68a63"/><polygon points="365.8,179.3 372.8,210.1 368.6,238.1 357.4,260.5 343.4,266.1 335,235.3 368,210.1" fill="#7a5d42"/><polygon points="295.7,232.5 335,235.3 343.4,266.1 329.4,277.3 309.7,260.5" fill="#9a7e59"/><polyline points="270.5,210.1 292.9,196.1 320.9,179.3 349,176.5" fill="none" stroke="#7a5f44" stroke-width="1.2"/></g></svg><!--/SKULL--></div>

    <!-- floating card -->
    <div id="float">
      <div class="abs" id="ic-siriis" style="left:22.500px;top:15px;width:72.500px;height:72.500px;border-radius:15px;background:#0b0b0b;overflow:hidden"><!--SIRIIS--><svg width="72.5" height="72.5" viewBox="0 0 72.5 72.5" style="display:block"><defs><filter id="srb" x="-10%" y="-10%" width="120%" height="120%"><feGaussianBlur stdDeviation=".55"/></filter></defs><rect width="72.5" height="72.5" fill="#090909"/><g filter="url(#srb)"><polygon points="19,74.6 23.1,59.8 31.3,53.2 39.6,49.9 45.3,53.2 49.5,74.6" fill="#37362a"/><polygon points="44.5,51.5 52.8,49.9 59.4,54.8 61.4,74.6 52.8,74.6 51.1,59.8" fill="#87602f"/><polygon points="59.4,53.2 65.9,58.1 69.6,66.3 69.2,74.6 61,74.6" fill="#5c452d"/><polygon points="39.6,49.9 45.3,53.2 51.9,74.6 44.5,74.6" fill="#2c2a20"/><polygon points="43.7,10.3 51.1,11.2 52.9,17.1 48.6,20.4 42.9,17.1" fill="#55331d"/><polygon points="37.9,20.2 47.8,20.2 54.6,28.4 52.9,38.3 59.5,46.6 57.9,53.3 47.8,49.2 41.2,41.8 39.6,30.1" fill="#5f371e"/><polygon points="44.5,22.7 51.1,28.4 50.3,38.3 55.2,46.6 51.1,48.2 45.3,40 43.7,30.1" fill="#9a5a2d" opacity=".8"/><polygon points="34.6,26.8 41.2,25.2 41.2,38.3 36.3,41.6 32.2,34.2" fill="#3a2417"/><polygon points="16.7,23.5 22.3,19.4 30.5,20.2 34.8,28.4 33.8,38.3 34.6,48.2 29.7,53.3 24.8,51.7 22.3,44.9 30.5,38.3 28,26.8 19.8,26.8" fill="#1e1713"/><polygon points="18.8,27 23.9,22.8 29.7,25.3 31.5,34.2 29.7,42.6 26.4,48.2 22.3,44.3 20.5,40 19.6,34.2" fill="#72594a"/><polygon points="19.2,30.1 23.1,28.4 24.9,36.7 23.9,43.3 20.8,40 19.8,34.2" fill="#a68a76" opacity=".85"/><polygon points="22.3,44.3 26.4,41.6 31.3,41.6 33.8,48.2 29.7,53.3 24.8,51.7" fill="#2a201a"/></g></svg><!--/SIRIIS--></div>
      <div class="abs" style="left:113px;top:28.300px;font-size:16.700px;letter-spacing:.42px;font-weight:bold;line-height:22px;color:#363c42;white-space:nowrap">Siriis Calea (Bounty)</div>
      <div class="abs" style="left:113px;top:54.500px;font-size:15.100px;line-height:18px;color:#9a9ea2;white-space:nowrap;letter-spacing:.2px">0 cards</div>
    </div>
  </div>
</div>
</body>
</html>
